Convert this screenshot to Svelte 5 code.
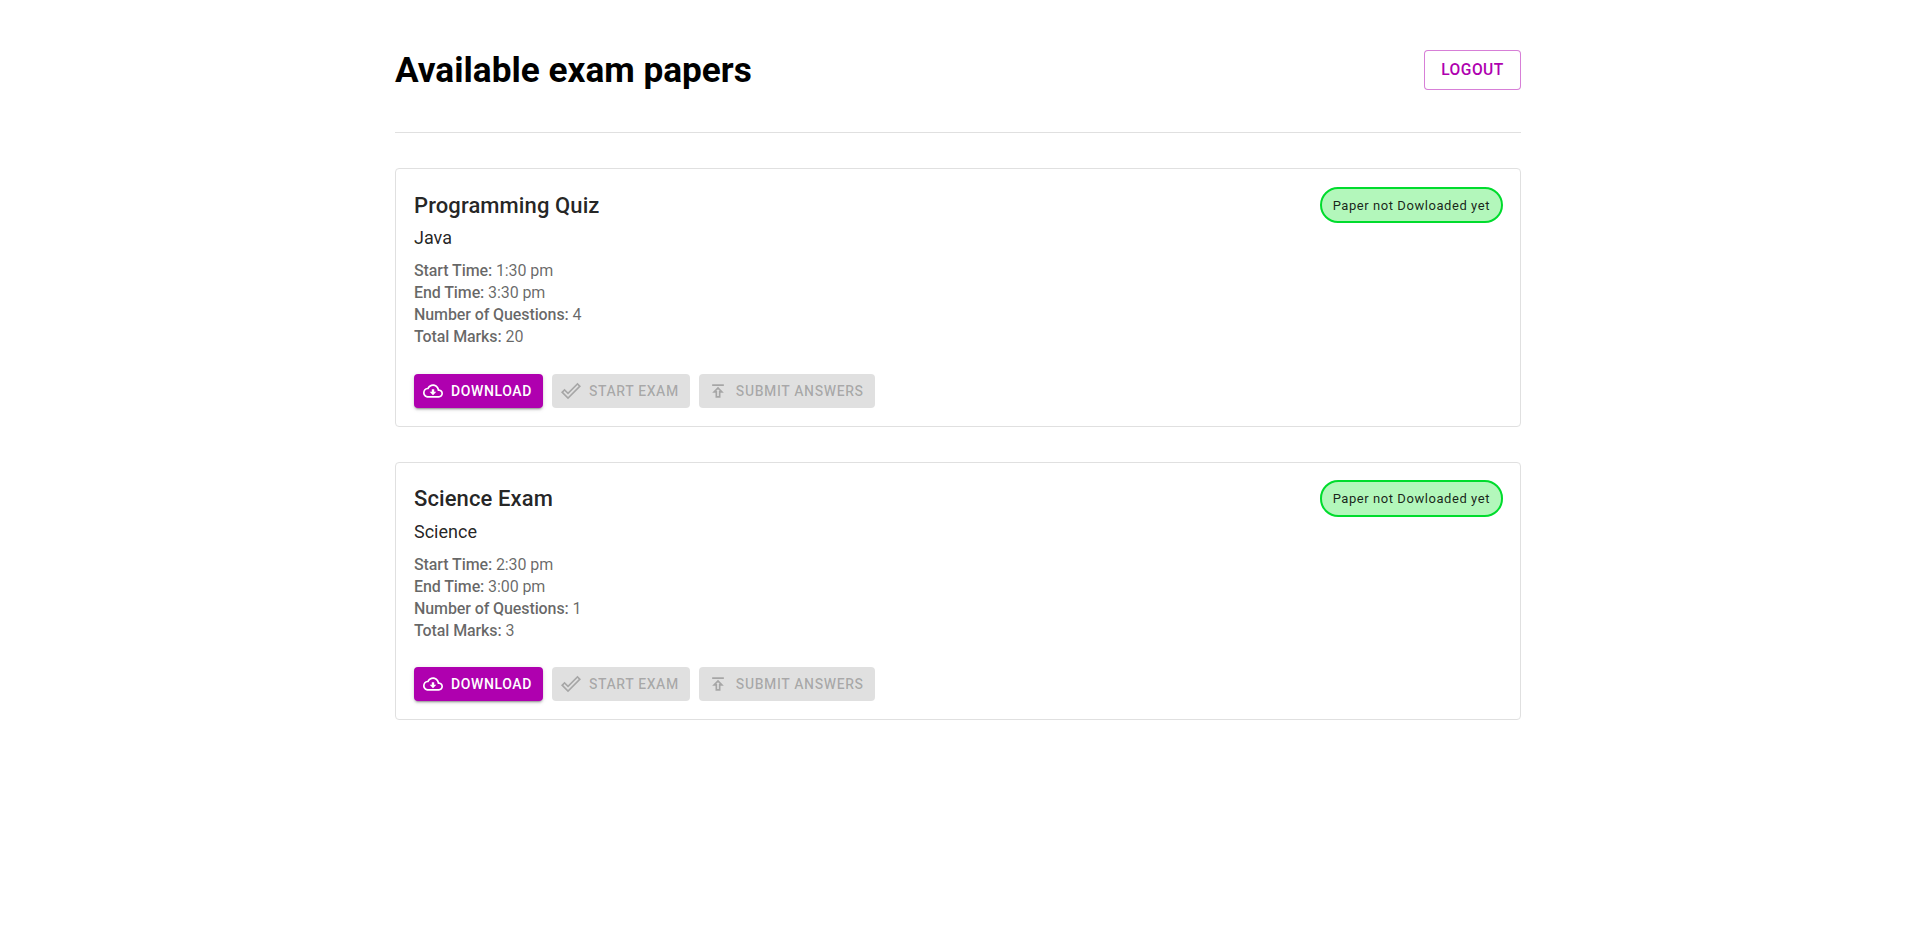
<script>
  const papers = [
    { title: 'Programming Quiz', subject: 'Java', start: '1:30 pm', end: '3:30 pm', questions: 4, marks: 20 },
    { title: 'Science Exam', subject: 'Science', start: '2:30 pm', end: '3:00 pm', questions: 1, marks: 3 }
  ];
</script>

<main class="page">
  <header class="top">
    <h1>Available exam papers</h1>
    <button class="logout">LOGOUT</button>
  </header>
  <hr class="divider" />
  <section class="list">
    {#each papers as p}
      <article class="card">
        <div class="info">
          <div class="head">
            <h2>{p.title}</h2>
            <span class="chip">Paper not Dowloaded yet</span>
          </div>
          <p class="subject">{p.subject}</p>
          <div class="details">
            <div><b>Start Time:</b> {p.start}</div>
            <div><b>End Time:</b> {p.end}</div>
            <div><b>Number of Questions:</b> {p.questions}</div>
            <div><b>Total Marks:</b> {p.marks}</div>
          </div>
        </div>
        <div class="actions">
          <button class="btn primary">
            <svg viewBox="0 0 24 24"><path d="M19.35 10.04C18.67 6.59 15.64 4 12 4c-2.89 0-5.4 1.64-6.65 4.04C2.34 8.36 0 10.91 0 14c0 3.31 2.69 6 6 6h13c2.76 0 5-2.24 5-5 0-2.64-2.05-4.78-4.65-4.96zM19 18H6c-2.21 0-4-1.79-4-4 0-2.05 1.53-3.76 3.56-3.97l1.07-.11.5-.95C8.08 7.14 9.94 6 12 6c2.62 0 4.88 1.86 5.39 4.43l.3 1.5 1.53.11c1.56.1 2.78 1.41 2.78 2.96 0 1.65-1.35 3-3 3zm-5.55-8h-2.9v3H8l4 4 4-4h-2.55z" /></svg>
            DOWNLOAD
          </button>
          <button class="btn" disabled>
            <svg viewBox="0 0 24 24"><path d="M19.77 4.93l1.4 1.4L8.43 19.07l-5.6-5.6 1.4-1.4 4.2 4.2L19.77 4.93m0-2.83L8.43 13.44l-4.2-4.2L0 13.47l8.43 8.43L24 6.33 19.77 2.1z" /></svg>
            START EXAM
          </button>
          <button class="btn" disabled>
            <svg viewBox="0 0 24 24"><path d="M5 4h14v2H5zm0 10h4v6h6v-6h4l-7-7-7 7zm8-2v6h-2v-6H9.83L12 9.83 14.17 12H13z" /></svg>
            SUBMIT ANSWERS
          </button>
        </div>
      </article>
    {/each}
  </section>
</main>

<style>
  :global(body) {
    margin: 0;
    background: #fff;
    font-family: Roboto, "Liberation Sans", sans-serif;
  }
  :global(#app) {
    padding-right: 2px;
  }
  .page {
    width: 1126px;
    margin: 0 auto;
    padding-top: 50px;
  }
  .top {
    display: flex;
    align-items: center;
    justify-content: space-between;
    height: 40px;
  }
  h1 {
    margin: 0;
    font-size: 35.2px;
    font-weight: 700;
    line-height: 40px;
    color: #000;
  }
  .logout {
    box-sizing: border-box;
    width: 97px;
    height: 40px;
    padding: 0;
    border: 1px solid rgba(175, 0, 175, 0.5);
    border-radius: 4px;
    background: #fff;
    color: #af00af;
    font: 500 15.6px/26px Roboto, sans-serif;
    letter-spacing: 0.46px;
  }
  .divider {
    margin: 42px 0 35.4px;
    border: 0;
    border-top: 1px solid #e0e0e0;
  }
  .list {
    display: flex;
    flex-direction: column;
    gap: 34.8px;
  }
  .card {
    box-sizing: border-box;
    height: 258.4px;
    padding: 17.4px 18px 18px;
    border: 1px solid #e0e0e0;
    border-radius: 4px;
    display: flex;
    flex-direction: column;
    justify-content: space-between;
  }
  .head {
    display: flex;
    justify-content: space-between;
    align-items: center;
    height: 36.6px;
  }
  h2 {
    margin: 0;
    font-size: 22px;
    font-weight: 500;
    letter-spacing: 0.1px;
    color: rgba(0, 0, 0, 0.87);
  }
  .chip {
    box-sizing: border-box;
    height: 36.6px;
    margin-right: -1px;
    padding: 0 11px;
    display: inline-flex;
    align-items: center;
    border: 2px solid #00dc2d;
    border-radius: 18.3px;
    background: #b3f7bb;
    font-size: 13px;
    letter-spacing: 0.56px;
    color: rgba(0, 0, 0, 0.87);
  }
  .subject {
    margin: 1px 0 0;
    font-size: 18px;
    line-height: 27px;
    color: rgba(0, 0, 0, 0.87);
  }
  .details {
    margin-top: 9px;
    font-size: 16px;
    line-height: 22px;
    letter-spacing: -0.1px;
    color: rgba(0, 0, 0, 0.6);
  }
  .details b {
    font-weight: 500;
  }
  .actions {
    display: flex;
    gap: 9px;
  }
  .btn {
    box-sizing: border-box;
    height: 34px;
    padding: 0 11px 0 9px;
    display: inline-flex;
    align-items: center;
    gap: 8px;
    border: 0;
    border-radius: 4px;
    font: 500 14px/26px Roboto, sans-serif;
    letter-spacing: 0.6px;
    background: rgba(0, 0, 0, 0.12);
    color: rgba(0, 0, 0, 0.26);
  }
  .btn svg {
    width: 20px;
    height: 20px;
    fill: currentColor;
  }
  .primary {
    background: #af00af;
    color: #fff;
    box-shadow: 0 3px 1px -2px rgba(0, 0, 0, 0.2), 0 2px 2px rgba(0, 0, 0, 0.14), 0 1px 5px rgba(0, 0, 0, 0.12);
  }
</style>
